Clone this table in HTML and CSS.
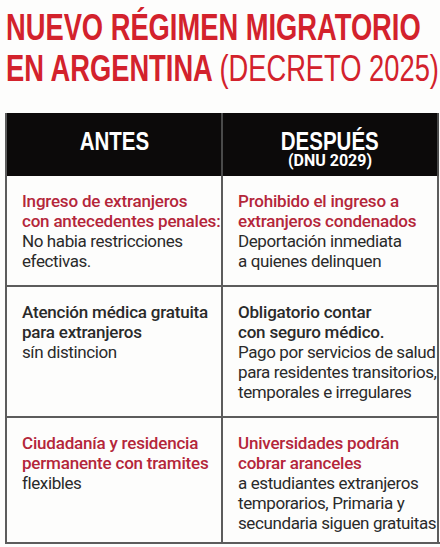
FILE: index.html
```html
<!DOCTYPE html>
<html lang="es">
<head>
    <meta charset="UTF-8">
    <meta name="viewport" content="width=device-width, initial-scale=1.0">
    <title>Nuevo régimen migratorio</title>
    <link rel="stylesheet" href="styles.css">
</head>
<body>
    <h1 class="title">
        <span class="title-line">NUEVO RÉGIMEN MIGRATORIO</span>
        <span class="title-line">EN ARGENTINA <span class="light">(DECRETO 2025)</span></span>
    </h1>

    <div class="compare">
        <div class="head"><span class="narrow">ANTES</span></div>
        <div class="head"><span class="narrow">DESPUÉS</span><small>(DNU 2029)</small></div>

        <div class="cell">
            <span class="lead red">Ingreso de extranjeros<br>con antecedentes penales:</span>
            No habia restricciones<br>efectivas.
        </div>
        <div class="cell">
            <span class="lead red">Prohibido el ingreso a<br>extranjeros condenados</span>
            Deportación inmediata<br>a quienes delinquen
        </div>

        <div class="cell row-border">
            <span class="lead">Atención médica gratuita<br>para extranjeros</span>
            sín distincion
        </div>
        <div class="cell row-border">
            <span class="lead">Obligatorio contar<br>con seguro médico.</span>
            Pago por servicios de salud<br>para residentes transitorios,<br>temporales e irregulares
        </div>

        <div class="cell row-border last">
            <span class="lead red">Ciudadanía y residencia<br>permanente con tramites</span>
            flexibles
        </div>
        <div class="cell row-border last">
            <span class="lead red">Universidades podrán<br>cobrar aranceles</span>
            a estudiantes extranjeros<br>temporarios, Primaria y<br>secundaria siguen gratuitas
        </div>
    </div>
</body>
</html>
```

FILE: styles.css
```css
html, body {
    overflow: hidden;
}
body {
    margin: 0;
    background-color: #fdfdfc;
    font-family: Roboto, "Liberation Sans", sans-serif;
}
.title {
    margin: 7px 0 0 6px;
    font-family: "Liberation Sans", Arial, sans-serif;
    font-size: 37px;
    line-height: 41px;
    font-weight: bold;
    color: #d3222c;
    white-space: nowrap;
}
.title-line {
    display: block;
    transform: scaleX(0.738);
    transform-origin: left;
}
.title .light {
    font-weight: normal;
}
.compare {
    display: grid;
    grid-template-columns: 216px 216px;
    width: 436px;
    margin: 24px 0 0 5px;
    border-left: 2px solid #5c5c5c;
    border-bottom: 2px solid #5c5c5c;
}
.head {
    height: 47px;
    padding-top: 16px;
    background-color: #0c0a0a;
    border-right: 2px solid #4a4a4a;
    color: #fff;
    text-align: center;
    font-family: "Liberation Sans", Arial, sans-serif;
    font-weight: bold;
    font-size: 25px;
    line-height: 24px;
}
.narrow {
    display: inline-block;
    transform: scaleX(0.82);
}
.head small {
    display: block;
    font-family: Roboto, "Liberation Sans", sans-serif;
    font-size: 16px;
    line-height: 16px;
}
.cell {
    padding: 15px 8px 14px 15px;
    border-right: 2px solid #5c5c5c;
    font-size: 17px;
    line-height: 20px;
    letter-spacing: -0.4px;
    color: #2a2a2a;
    white-space: nowrap;
}
.row-border {
    border-top: 2px solid #5c5c5c;
}
.last {
    padding-bottom: 9px;
}
.lead {
    display: block;
    font-weight: 500;
    letter-spacing: -0.2px;
}
.red {
    color: #b4263a;
}
```
